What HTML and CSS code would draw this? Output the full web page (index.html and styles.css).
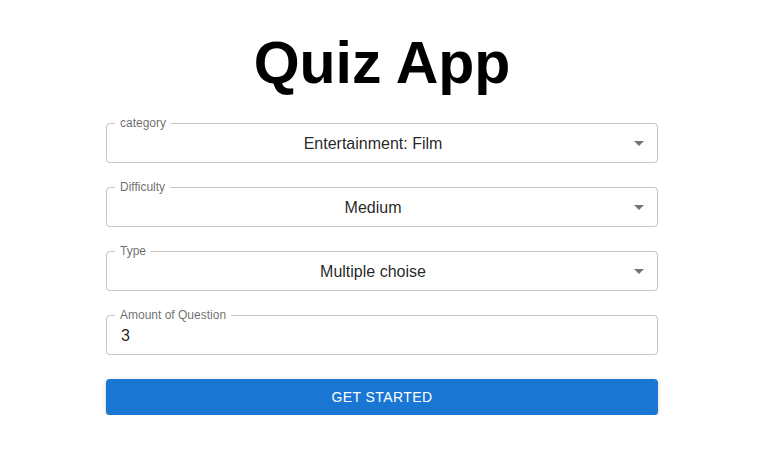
FILE: index.html
```html
<!DOCTYPE html>
<html lang="en">
<head>
<meta charset="utf-8">
<title>Quiz App</title>
<link rel="stylesheet" href="styles.css">
</head>
<body>
<main class="app">
  <h1 class="title">Quiz App</h1>
  <form class="form">
    <div class="field">
      <span class="label">category</span>
      <div class="value select">Entertainment: Film</div>
      <svg class="arrow" viewBox="0 0 24 24" width="24" height="24"><path d="M7 10l5 5 5-5z"/></svg>
    </div>
    <div class="field">
      <span class="label">Difficulty</span>
      <div class="value select">Medium</div>
      <svg class="arrow" viewBox="0 0 24 24" width="24" height="24"><path d="M7 10l5 5 5-5z"/></svg>
    </div>
    <div class="field">
      <span class="label">Type</span>
      <div class="value select">Multiple choise</div>
      <svg class="arrow" viewBox="0 0 24 24" width="24" height="24"><path d="M7 10l5 5 5-5z"/></svg>
    </div>
    <div class="field">
      <span class="label">Amount of Question</span>
      <div class="value">3</div>
    </div>
    <button type="button" class="btn">Get Started</button>
  </form>
</main>
</body>
</html>
```
FILE: styles.css
```css
* { box-sizing: border-box; }
html, body { margin: 0; background: #fff; }
body {
  padding-right: 13px;
  font-family: "Liberation Sans", Arial, sans-serif;
  color: rgba(0,0,0,0.87);
}
.app {
  width: 552px;
  margin: 0 auto;
}
.title {
  margin: 28px 0 25px;
  font-size: 59px;
  line-height: 70px;
  font-weight: 700;
  text-align: center;
  color: #000;
}
.form {
  display: flex;
  flex-direction: column;
  gap: 24px;
}
.field {
  position: relative;
  height: 40px;
  border: 1px solid rgba(0,0,0,0.23);
  border-radius: 4px;
  display: flex;
  align-items: center;
}
.label {
  position: absolute;
  top: -9px;
  left: 8px;
  padding: 0 5px;
  background: #fff;
  font-size: 12px;
  line-height: 16px;
  color: rgba(0,0,0,0.6);
}
.value {
  flex: 1;
  padding: 0 14px;
  font-size: 16px;
  line-height: 23px;
}
.value.select {
  padding: 0 31px 0 13px;
  text-align: center;
}
.arrow {
  position: absolute;
  right: 6px;
  top: 7px;
  fill: rgba(0,0,0,0.54);
}
.btn {
  height: 36px;
  border: 0;
  border-radius: 4px;
  background: #1976d2;
  color: #fff;
  font-family: "Liberation Sans", Arial, sans-serif;
  font-size: 14px;
  letter-spacing: 0.4px;
  text-transform: uppercase;
  box-shadow: 0 3px 1px -2px rgba(0,0,0,.2), 0 2px 2px 0 rgba(0,0,0,.14), 0 1px 5px 0 rgba(0,0,0,.12);
  cursor: pointer;
}
```
